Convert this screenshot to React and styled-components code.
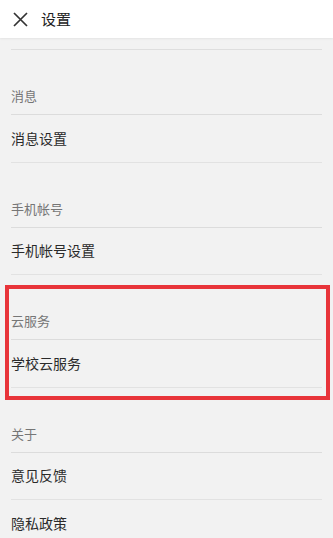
import React from "react";
import styled, { createGlobalStyle } from "styled-components";

const GlobalStyle = createGlobalStyle`
  html, body {
    margin: 0;
    padding: 0;
    background: #f2f2f2;
    font-family: "Noto Sans CJK SC", "Noto Sans", sans-serif;
  }
`;

const sections = [
  { title: "消息", items: ["消息设置"] },
  { title: "手机帐号", items: ["手机帐号设置"] },
  { title: "云服务", items: ["学校云服务"], highlighted: true },
  { title: "关于", items: ["意见反馈", "隐私政策"] },
];

const App = () => {
  return (
    <>
      <GlobalStyle />
      <Page>
        <Header>
          <CloseButton type="button" aria-label="关闭">
            <svg width="15" height="15" viewBox="0 0 15 15">
              <path
                d="M1 1 L14 14 M14 1 L1 14"
                stroke="#333"
                strokeWidth="1.7"
                fill="none"
              />
            </svg>
          </CloseButton>
          <Title>设置</Title>
        </Header>

        <List>
          <TopDivider />
          {sections.map((section) => (
            <Section key={section.title}>
              <SectionHeader>{section.title}</SectionHeader>
              {section.items.map((item) => (
                <Item key={item}>{item}</Item>
              ))}
              {section.highlighted && <Highlight />}
            </Section>
          ))}
        </List>
      </Page>
    </>
  );
};

export default App;

const Page = styled.div`
  width: 100%;
  min-height: 538px;
  background: #f2f2f2;
  overflow: hidden;
`;

const Header = styled.div`
  height: 38px;
  background: #ffffff;
  display: flex;
  align-items: center;
  padding-left: 13px;
  box-sizing: border-box;
  box-shadow: 0 1px 2px rgba(0, 0, 0, 0.06);
`;

const CloseButton = styled.button`
  display: flex;
  align-items: center;
  justify-content: center;
  padding: 0;
  margin: 0 13px 0 0;
  border: none;
  background: none;
  width: 15px;
  height: 15px;
`;

const Title = styled.span`
  font-size: 15px;
  color: #222;
  line-height: 20px;
`;

const List = styled.div`
  padding: 0 11px;
`;

const TopDivider = styled.div`
  margin-top: 11px;
  height: 1px;
  background: #dedede;
`;

const Section = styled.div`
  position: relative;
`;

const SectionHeader = styled.div`
  height: 65px;
  box-sizing: border-box;
  display: flex;
  align-items: flex-end;
  padding-bottom: 9px;
  border-bottom: 1px solid #dcdcdc;
  font-size: 13px;
  line-height: 18px;
  color: #767676;
`;

const Item = styled.div`
  height: 47.5px;
  box-sizing: border-box;
  display: flex;
  align-items: center;
  padding-bottom: 1px;
  border-bottom: 1px solid #e2e2e2;
  font-size: 14px;
  color: #2a2a2a;
`;

const Highlight = styled.div`
  position: absolute;
  top: 10px;
  bottom: -12px;
  left: -6px;
  right: -8px;
  border: 4px solid #e8343a;
  pointer-events: none;
`;
